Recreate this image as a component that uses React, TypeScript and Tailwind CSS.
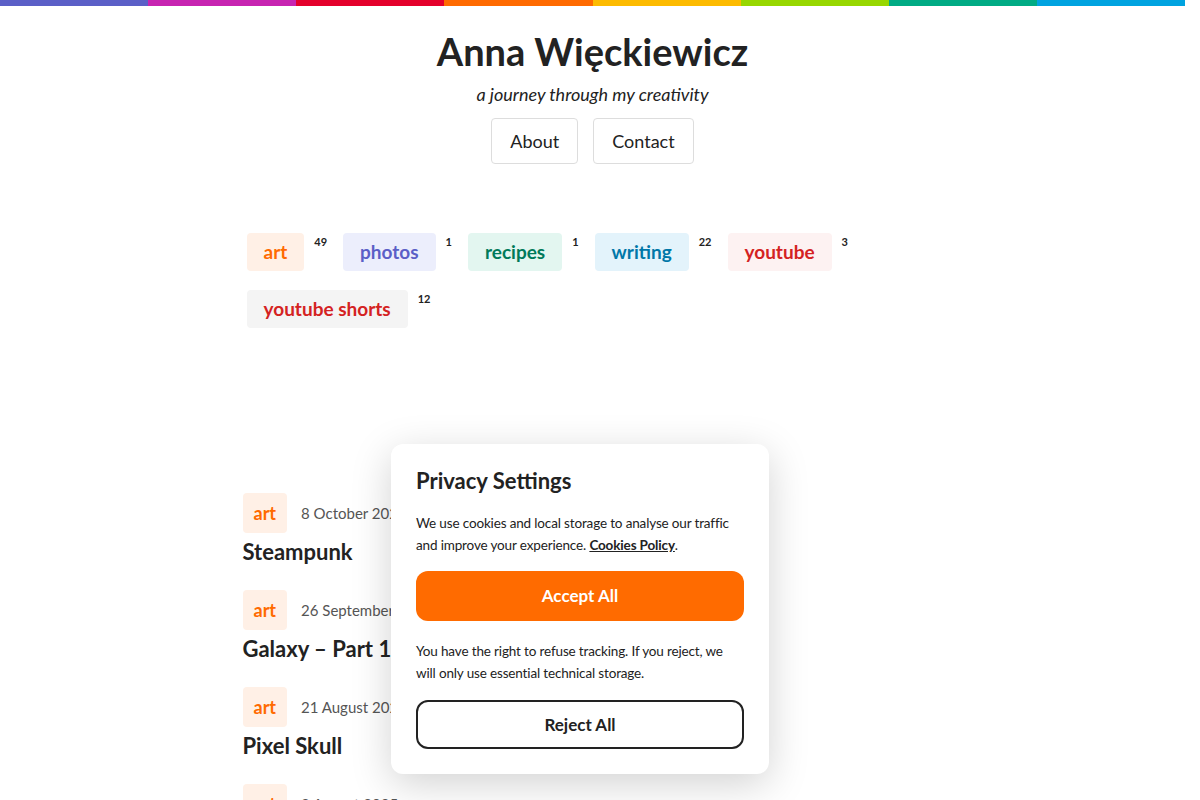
import React from "react";

const font = { fontFamily: "Lato, 'Noto Sans', 'Liberation Sans', sans-serif" };

const bar = ["#5b5fc7", "#c724b1", "#e4002b", "#ff6a00", "#fdbb00", "#97d700", "#00ab84", "#00a3e0"];

const tags = [
  { name: "art", count: 49, cls: "bg-[#fff0e6] text-[#ff6a00]" },
  { name: "photos", count: 1, cls: "bg-[#eceefc] text-[#5b5fc7]" },
  { name: "recipes", count: 1, cls: "bg-[#e3f6f0] text-[#007a5a]" },
  { name: "writing", count: 22, cls: "bg-[#e3f3fb] text-[#0077a8]" },
  { name: "youtube", count: 3, cls: "bg-[#fdf2f2] text-[#d42222]" },
  { name: "youtube shorts", count: 12, cls: "bg-[#f4f4f4] text-[#d42222]" },
];

const posts = [
  { date: "8 October 2025", title: "Steampunk" },
  { date: "26 September 2025", title: "Galaxy – Part 1" },
  { date: "21 August 2025", title: "Pixel Skull" },
  { date: "2 August 2025", title: "Sunset" },
];

export default function App() {
  return (
    <div className="relative w-[1185px] h-[800px] overflow-hidden bg-white text-[#222]" style={font}>
      <div className="flex h-[6px]">
        {bar.map((c) => (
          <div key={c} className="flex-1" style={{ background: c }} />
        ))}
      </div>

      <header className="pt-[21px] text-center">
        <h1 className="text-[38px] leading-[48px] font-bold">Anna Więckiewicz</h1>
        <div className="mt-[6px] text-[18px] leading-[26px] italic">a journey through my creativity</div>
        <nav className="mt-[11px] flex justify-center gap-[15px]">
          <a className="h-[46px] px-[18px] flex items-center border border-[#dddddd] rounded-[4px] text-[18px]">About</a>
          <a className="h-[46px] px-[18px] flex items-center border border-[#dddddd] rounded-[4px] text-[18px]">Contact</a>
        </nav>
      </header>

      <main className="w-[700px] mx-auto">
        <div className="mt-[69px] pl-[4px] flex flex-wrap gap-x-[16px] gap-y-[19px]">
          {tags.map((t) => (
            <div key={t.name} className="flex items-start">
              <span className={`h-[38px] px-[17px] flex items-center rounded-[4px] text-[19px] font-bold ${t.cls}`}>
                {t.name}
              </span>
              <sup className="ml-[10px] mt-[9px] text-[11px] font-bold top-0">{t.count}</sup>
            </div>
          ))}
        </div>

        <div className="mt-[165px] flex flex-col gap-[24px]">
          {posts.map((p) => (
            <article key={p.title}>
              <div className="flex items-center gap-[14px]">
                <span className="h-[40px] px-[11px] flex items-center rounded-[4px] bg-[#fff0e6] text-[#ff6a00] text-[18px] font-bold">
                  art
                </span>
                <span className="text-[15px] text-[#555]">{p.date}</span>
              </div>
              <h2 className="mt-[5px] text-[22px] leading-[28px] font-bold">{p.title}</h2>
            </article>
          ))}
        </div>
      </main>

      <div className="absolute left-[391px] top-[444px] w-[378px] bg-white rounded-[12px] px-[25px] pt-[24px] pb-[25px] shadow-[0_10px_40px_rgba(0,0,0,0.18)]">
        <h3 className="text-[22px] leading-[26px] font-bold">Privacy Settings</h3>
        <p className="mt-[19px] text-[13.5px] leading-[21.5px] tracking-[-0.15px]">
          We use cookies and local storage to analyse our traffic and improve your experience.{" "}
          <a className="font-bold underline">Cookies Policy</a>.
        </p>
        <button className="mt-[15px] w-full h-[50px] rounded-[12px] bg-[#ff6b00] text-white text-[17px] font-bold">
          Accept All
        </button>
        <p className="mt-[20px] text-[13.5px] leading-[21.5px] tracking-[-0.15px]">
          You have the right to refuse tracking. If you reject, we will only use essential technical storage.
        </p>
        <button className="mt-[16px] w-full h-[49px] rounded-[12px] border-2 border-[#222] bg-white text-[17px] font-bold">
          Reject All
        </button>
      </div>
    </div>
  );
}
